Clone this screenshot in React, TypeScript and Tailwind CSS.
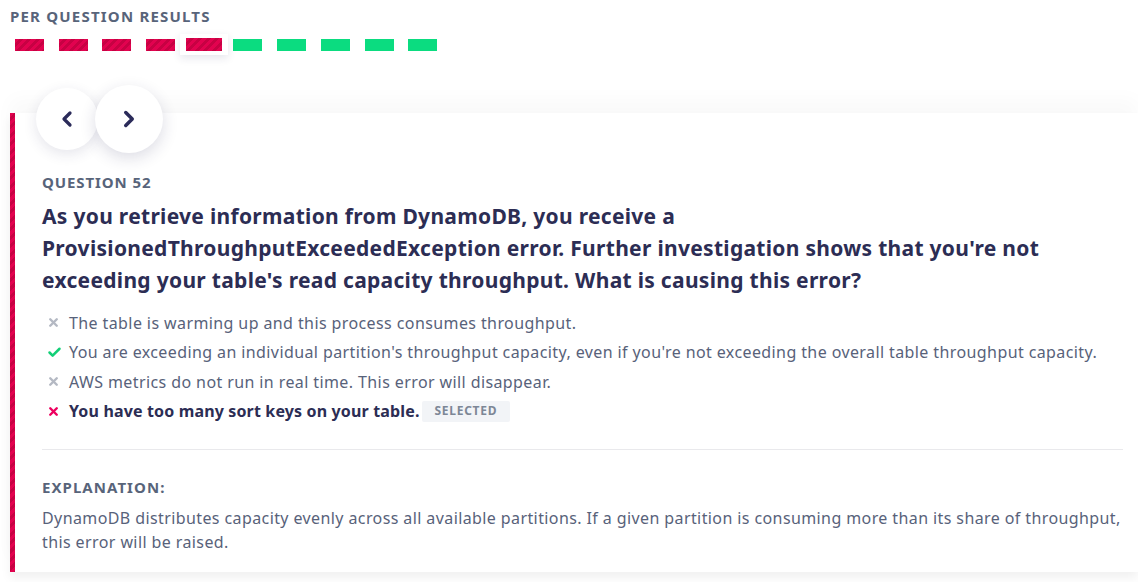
import { ChevronLeft, ChevronRight, Check, X } from "lucide-react";

const font = { fontFamily: '"Noto Sans", "Open Sans", sans-serif' };

const results = [false, false, false, false, false, true, true, true, true, true];
const current = 4;

const stripes =
  "bg-[repeating-linear-gradient(135deg,#e2024f_0px,#e2024f_3px,#c70143_3px,#c70143_6px)]";

const answers = [
  { text: "The table is warming up and this process consumes throughput.", kind: "wrong" },
  {
    text: "You are exceeding an individual partition's throughput capacity, even if you're not exceeding the overall table throughput capacity.",
    kind: "correct",
  },
  { text: "AWS metrics do not run in real time. This error will disappear.", kind: "wrong" },
  { text: "You have too many sort keys on your table.", kind: "selected" },
];

function ResultBar({ ok, active }: { ok: boolean; active: boolean }) {
  const fill = ok ? "bg-[#0bdc80]" : stripes;
  if (active) {
    return (
      <div className="relative -ml-[4px] -mr-[3px]">
        <div className="absolute -inset-x-[6px] -inset-y-[4px] bg-white shadow-[0_3px_8px_rgba(40,40,90,0.12)]" />
        <div className={`relative w-[36px] h-[13px] ${fill}`} />
      </div>
    );
  }
  return <div className={`w-[29px] h-[12px] ${fill}`} />;
}

export default function App() {
  return (
    <div className="w-[1138px] h-[582px] overflow-hidden bg-white" style={font}>
      <div className="px-[10px] pt-[6px]">
        <h3 className="text-[15px] font-bold tracking-[0.08em] text-[#58647a] leading-[20px]">
          PER QUESTION RESULTS
        </h3>
        <div className="flex items-center gap-[14.7px] pl-[5px] mt-[12px] h-[13px]">
          {results.map((ok, i) => (
            <ResultBar key={i} ok={ok} active={i === current} />
          ))}
        </div>
      </div>

      <div className="relative mt-[62px] ml-[10px] shadow-[0_-14px_18px_rgba(0,0,0,0.025),0_6px_10px_rgba(0,0,0,0.06)] bg-white flex">
        <div className={`w-[5px] shrink-0 ${stripes}`} />
        <div className="flex-1 pl-[27px] pr-[15px] pb-[18px]">
          <div className="flex items-center -mt-[29px] -ml-[6px] h-[70px]">
            <button className="w-[62px] h-[62px] rounded-full bg-white flex items-center justify-center shadow-[0_4px_14px_rgba(40,40,90,0.12)] text-[#2b2b5a]">
              <ChevronLeft size={24} strokeWidth={3.25} />
            </button>
            <button className="w-[68px] h-[68px] rounded-full bg-white flex items-center justify-center shadow-[0_5px_16px_rgba(40,40,90,0.16)] text-[#2b2b5a] -ml-[3px]">
              <ChevronRight size={26} strokeWidth={3.25} />
            </button>
          </div>

          <div className="mt-[18px] text-[15px] font-bold tracking-[0.06em] text-[#58647a] leading-[20px]">
            QUESTION 52
          </div>
          <p className="mt-[8px] text-[21px] font-bold tracking-[0.3px] text-[#2c2d54] leading-[32px]">
            As you retrieve information from DynamoDB, you receive a
            <br />
            ProvisionedThroughputExceededException error. Further investigation shows that you're not
            <br />
            exceeding your table's read capacity throughput. What is causing this error?
          </p>

          <ul className="mt-[12px] flex flex-col">
            {answers.map((a) => (
              <li key={a.text} className="flex items-center h-[29.5px] text-[16px] tracking-[0.4px]">
                <span className="w-[27px] pl-[5px] flex items-center">
                  {a.kind === "correct" ? (
                    <Check size={15} strokeWidth={4} className="text-[#12cf77]" />
                  ) : (
                    <X
                      size={13}
                      strokeWidth={4.5}
                      className={a.kind === "selected" ? "text-[#ee005f]" : "text-[#b4b9c3]"}
                    />
                  )}
                </span>
                <span
                  className={
                    a.kind === "selected"
                      ? "font-bold tracking-[0.15px] text-[#2c2d54]"
                      : "text-[#58627a]"
                  }
                >
                  {a.text}
                </span>
                {a.kind === "selected" && (
                  <span className="ml-[2px] px-[13px] h-[21px] flex items-center bg-[#f2f4f7] rounded-[2px] text-[12px] font-bold tracking-[0.06em] text-[#7d8796]">
                    SELECTED
                  </span>
                )}
              </li>
            ))}
          </ul>

          <div className="mt-[23px] border-t border-[#e9e9ec]" />

          <div className="mt-[26px] text-[15px] font-bold tracking-[0.07em] text-[#58647a] leading-[22px]">
            EXPLANATION:
          </div>
          <p className="mt-[8px] text-[16px] tracking-[0.4px] text-[#58627a] leading-[24px]">
            DynamoDB distributes capacity evenly across all available partitions. If a given partition
            is consuming more than its share of throughput, this error will be raised.
          </p>
        </div>
      </div>
    </div>
  );
}
